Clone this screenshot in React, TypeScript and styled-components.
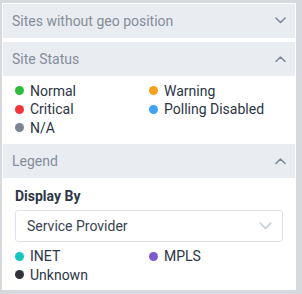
import React from "react";
import styled, { createGlobalStyle } from "styled-components";

const Global = createGlobalStyle`
  html, body { margin: 0; padding: 0; background: #d6d9dd; }
  body { font-family: Roboto, "Liberation Sans", sans-serif; }
  * { box-sizing: border-box; }
`;

const Page = styled.div`
  width: 302px;
  height: 294px;
  padding: 3px 6px 4px 2px;
  background: #d6d9dd;
`;

const Panel = styled.div`
  background: #fff;
  border: 1px solid #fff;
  height: 287px;
  display: flex;
  flex-direction: column;
`;

const Header = styled.div<{ $gap?: boolean }>`
  height: 34px;
  margin-top: ${(p) => (p.$gap ? "4px" : "0")};
  background: #e9ecf0;
  display: flex;
  align-items: center;
  justify-content: space-between;
  padding: 0 9px 0 9px;
  color: #858d9a;
  font-size: 14px;
`;

const Body = styled.div<{ $pt: number; $pb: number }>`
  padding: ${(p) => p.$pt}px 12px ${(p) => p.$pb}px 12px;
`;

const Grid = styled.div`
  display: grid;
  grid-template-columns: 1fr 1fr;
  row-gap: 0;
`;

const Item = styled.div`
  display: flex;
  align-items: center;
  gap: 6px;
  height: 18.5px;
  font-size: 14px;
  color: #2c3545;
`;

const Dot = styled.span<{ $c: string }>`
  width: 9px;
  height: 9px;
  border-radius: 50%;
  background: ${(p) => p.$c};
  flex: none;
`;

const Label = styled.div`
  font-size: 14px;
  font-weight: 700;
  color: #2e3746;
  line-height: 19px;
  margin-bottom: 4px;
`;

const Select = styled.div`
  height: 32px;
  border: 1px solid #dfe3e8;
  border-radius: 3px;
  display: flex;
  align-items: center;
  justify-content: space-between;
  padding: 0 10px 0 11px;
  font-size: 14px;
  color: #3a4352;
  margin-bottom: 5px;
`;

const Chevron = ({ up, color, w = 12 }: { up?: boolean; color: string; w?: number }) => (
  <svg width={w} height={w / 2 + 2} viewBox="0 0 12 8" fill="none">
    <path
      d={up ? "M1 7 L6 2 L11 7" : "M1 1 L6 6 L11 1"}
      stroke={color}
      strokeWidth="1.6"
      strokeLinecap="round"
      strokeLinejoin="round"
    />
  </svg>
);

export default function App() {
  return (
    <>
      <Global />
      <Page>
        <Panel>
          <Header>
            <span>Sites without geo position</span>
            <Chevron color="#7c8696" w={11} />
          </Header>
          <Header $gap>
            <span>Site Status</span>
            <Chevron up color="#7c8696" w={11} />
          </Header>
          <Body $pt={6} $pb={7}>
            <Grid>
              <Item><Dot $c="#2dbb3c" />Normal</Item>
              <Item><Dot $c="#f2a01e" />Warning</Item>
              <Item><Dot $c="#f5333b" />Critical</Item>
              <Item><Dot $c="#41a2f5" />Polling Disabled</Item>
              <Item><Dot $c="#7d8593" />N/A</Item>
            </Grid>
          </Body>
          <Header>
            <span>Legend</span>
            <Chevron up color="#7c8696" w={11} />
          </Header>
          <Body $pt={9} $pb={5}>
            <Label>Display By</Label>
            <Select>
              <span>Service Provider</span>
              <Chevron color="#c9d0d8" w={13} />
            </Select>
            <Grid>
              <Item><Dot $c="#16c5c2" />INET</Item>
              <Item><Dot $c="#7c5bd0" />MPLS</Item>
              <Item><Dot $c="#2e3338" />Unknown</Item>
            </Grid>
          </Body>
        </Panel>
      </Page>
    </>
  );
}
